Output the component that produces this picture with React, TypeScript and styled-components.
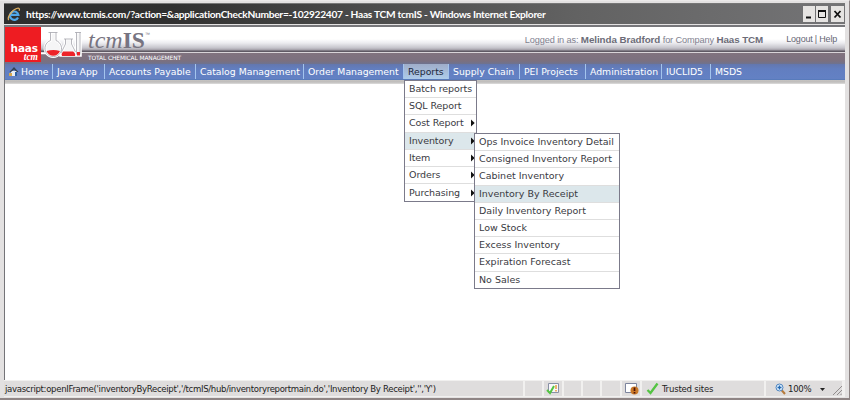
import React from 'react';
import styled, { createGlobalStyle } from 'styled-components';

const Global = createGlobalStyle`
  * { box-sizing: border-box; }
  html, body { margin: 0; padding: 0; overflow: hidden; background: #e3e1e1; }
`;

const verdana = `"DejaVu Sans", Verdana, sans-serif`;

const Window = styled.div`
  width: 850px;
  height: 400px;
  display: flex;
  flex-direction: column;
  background: #e3e1e1;
  border-top: 1px solid #ebe9e9;
  border-right: 1px solid #8d8484;
  border-bottom: 2px solid #8f8585;
  padding: 2px 3px 0 4px;
  font-family: ${verdana};
`;

const TitleBar = styled.header`
  height: 21px;
  flex: none;
  display: flex;
  align-items: center;
  border-top: 1px solid #777;
  margin-right: 1px;
  padding: 0 1px 0 3px;
  background: linear-gradient(90deg, #2e2e2e 0, #303030 20%, #4a4a4a 42%, #626262 68%, #747476 100%);
`;

const Title = styled.h1`
  margin: 0 auto 0 5px;
  font: 700 10.2px/19px Lato, "Trebuchet MS", sans-serif;
  letter-spacing: -0.28px;
  color: #fff;
  white-space: nowrap;
`;

const WindowButtons = styled.div`
  display: flex;
  gap: 1px;
  height: 16px;
  svg { display: block; width: 12px; height: 16px; background: #e6e4e2; }
  svg:last-child { width: 13px; margin-left: 2px; }
`;

const Page = styled.main`
  height: 355px;
  flex: none;
  display: flex;
  flex-direction: column;
  background: #fff;
  border-left: 1px solid #747478;
  border-top: 2px solid #77777b;
  margin: 1px 1px 0 0;
  position: relative;
`;

const Banner = styled.div`
  height: 37px;
  flex: none;
  display: flex;
  background: linear-gradient(180deg, #fff 0, #fff 12px, #ececf0 16px, #c4c3ca 21px, #a19da6 23px, #5f5964 24px, #5f5964 25px, #d8d4d8 25px, #d8d4d8 26px, #81737f 26px, #7b707f 34px, #6e7390 37px);
`;

const HaasLogo = styled.div`
  width: 36px;
  height: 35px;
  background: #ee1c22;
  color: #fff;
  display: flex;
  flex-direction: column;
  align-items: flex-end;
  padding: 16px 3px 0 0;
`;
const HaasName = styled.b`
  font: 700 10.5px/10px ${verdana};
  letter-spacing: -0.1px;
`;
const HaasUnit = styled.i`
  font: italic 700 9.5px/8px "Liberation Serif", serif;
`;

const Flasks = styled.svg`
  width: 44px;
  height: 35px;
  display: block;
`;

const Brand = styled.div`
  width: 110px;
  display: flex;
  flex-direction: column;
  padding: 0 0 0 3px;
`;
const BrandName = styled.div`
  height: 26px;
  font: italic 24px/27px "Liberation Serif", serif;
  color: #777481;
  white-space: nowrap;
  b { font-style: normal; font-size: 23.5px; color: #777481; }
  sup { font: 5px/5px "Liberation Sans", sans-serif; vertical-align: 12px; }
`;
const Tagline = styled.div`
  font: 5.9px/11px ${verdana};
  letter-spacing: -0.1px;
  color: #fff;
  white-space: nowrap;
`;

const Session = styled.div`
  margin-left: auto;
  height: 24px;
  display: flex;
  padding: 0 8px 0 0;
  font: 9.2px/25px "Liberation Sans", Arial, sans-serif;
  color: #81818f;
  white-space: nowrap;
  b { font-size: 9.8px; letter-spacing: -0.07px; color: #6c6c78; }
`;
const Login = styled.span`
  letter-spacing: -0.12px;
`;
const Links = styled.span`
  margin-left: 23px;
  font-size: 9px;
  letter-spacing: -0.2px;
  color: #666674;
`;

const Nav = styled.nav`
  height: 16px;
  flex: none;
  display: flex;
  background: linear-gradient(180deg, #6477ad 0, #627ec0 5px, #6381c4 100%);
  border-bottom: 1px solid #587bbb;
`;
const NavItem = styled.a<{ $w: number; $active?: boolean; $last?: boolean }>`
  width: ${(p) => p.$w}px;
  height: 15px;
  padding-left: 4px;
  flex: none;
  display: flex;
  font: 9.3px/15px ${verdana};
  color: ${(p) => (p.$active ? '#20283a' : '#fff')};
  background: ${(p) => (p.$active ? 'linear-gradient(180deg, #9fadc9, #aeccea)' : 'transparent')};
  border-right: ${(p) => (p.$last ? 'none' : '1px solid #a3c4ed')};
  white-space: nowrap;
  svg { width: 10px; height: 11px; margin: 2px 2px 0 0; flex: none; }
`;
const Shade = styled.div`
  height: 4px;
  flex: none;
  background: linear-gradient(180deg, #c5c3c1, #bebcbb 2px, #dedddc);
`;

const Menu = styled.ul<{ $x: number; $y: number; $w: number; $ls?: number }>`
  position: absolute;
  left: ${(p) => p.$x}px;
  top: ${(p) => p.$y}px;
  width: ${(p) => p.$w}px;
  letter-spacing: ${(p) => p.$ls ?? 0}px;
  margin: 0;
  padding: 0;
  list-style: none;
  background: #fff;
  border: 1px solid #7b7a8a;
`;
const MenuItem = styled.li<{ $active?: boolean }>`
  height: 17.2px;
  display: flex;
  align-items: center;
  justify-content: space-between;
  padding: 0 1px 0 4px;
  font: 9.5px/16px ${verdana};
  color: #3a3a42;
  white-space: nowrap;
  background: ${(p) => (p.$active ? '#dce7eb' : '#fff')};
  border-bottom: 1px solid #dedede;
  &:last-child { border-bottom: 0; height: 16.8px; }
  svg { width: 5px; height: 8px; }
`;

const StatusBar = styled.footer`
  height: 18px;
  flex: none;
  display: flex;
  gap: 2px;
  border-top: 1px solid #bcbab9;
  background: #f1f0ef;
  margin: -1px 1px 0 0;
  color: #222;
  font: 9.5px/15px "DejaVu Sans Condensed", "DejaVu Sans", Tahoma, sans-serif;
`;
const Cell = styled.div<{ $w: number; $pad?: number; $gap?: number; $ls?: number }>`
  width: ${(p) => p.$w}px;
  height: 15px;
  margin-top: 1px;
  flex: none;
  display: flex;
  align-items: center;
  gap: ${(p) => p.$gap ?? 0}px;
  padding-left: ${(p) => p.$pad ?? 0}px;
  letter-spacing: ${(p) => p.$ls ?? 0}px;
  background: #dfdddd;
  white-space: nowrap;
  svg { flex: none; display: block; }
`;
const DropArrow = styled.svg`
  width: 11px;
  height: 12px;
  margin-left: 7px;
`;

const IeIcon = () => (
  <svg width="14" height="15" viewBox="0 0 14 15">
    <path d="M11 10.5A4.2 4.2 0 1 1 11.3 7.8H4" fill="none" stroke="#4fa7e8" strokeWidth="2.2" />
    <path d="M2 13C-.7 12 4 3.500 9.500 1.500c3-1 3.400.5 2.600 2.200" fill="none" stroke="#dcaf62" strokeWidth="1.300" />
  </svg>
);
const HomeIcon = () => (
  <svg viewBox="0 0 10 11">
    <path d="M2 5h6v5H2z" fill="#e8edf5" />
    <path d="M.5 6 5 1 9.500 6H8L5 3.500 2 6z" fill="#36424f" />
    <path d="M6 6h2v4H6z" fill="#2d5fa0" />
    <path d="M0 7h3v3H0z" fill="#d8a74c" />
  </svg>
);
const Arrow = () => (
  <svg viewBox="0 0 5 8"><path d="M1 0.500 4.700 4 1 7.500z" fill="#111" /></svg>
);
const Glassware = () => (
  <Flasks viewBox="0 0 44 35">
    <path d="M0 26.500h40" stroke="#fff" strokeWidth="1.500" />
    <path d="M9.500 5.500h5.500v8a8.300 8.300 0 1 1-5.500 0zM24 12h7v5l5 11.500H20l4-11.500zM35 5.500h4.500v23H35z" fill="#f5f5f6" stroke="#fff" strokeWidth="2.600" />
    <path d="M7.500 5.500h9M9.500 5.500v8a8.300 8.300 0 1 0 5.500 0V5.500M23 12h9M24.500 12v5L20 26M30.500 12v5l4 8M34 5.500h6M35.500 5.500v22M39 5.500v22" fill="none" stroke="#a5a4ac" strokeWidth=".8" />
    <path d="M5.500 24q7-2 13.500 0-2 4.800-6.750 4.800t-6.750-4.800zM22 24.500h10q3 2 2 4.500H21q-1-2.500 1-4.500zM36 25h3v3.500h-3z" fill="#ed2329" />
  </Flasks>
);
const Check = ({ size = 13 }: { size?: number }) => (
  <svg width={size} height={size} viewBox="0 0 13 13">
    <path d="M1.500 8 4.500 11 11.500 1.500" fill="none" stroke="#54c443" strokeWidth="2.300" />
  </svg>
);

const navItems = [
  { label: 'Java App', w: 52 },
  { label: 'Accounts Payable', w: 91 },
  { label: 'Catalog Management', w: 108 },
  { label: 'Order Management', w: 100 },
  { label: 'Reports', w: 45, active: true },
  { label: 'Supply Chain', w: 71 },
  { label: 'PEI Projects', w: 66 },
  { label: 'Administration', w: 76 },
  { label: 'IUCLID5', w: 49 },
  { label: 'MSDS', w: 60, last: true },
];
const reports = [
  { label: 'Batch reports' },
  { label: 'SQL Report' },
  { label: 'Cost Report', sub: true },
  { label: 'Inventory', sub: true, active: true },
  { label: 'Item', sub: true },
  { label: 'Orders', sub: true },
  { label: 'Purchasing', sub: true },
];
const inventory = [
  'Ops Invoice Inventory Detail',
  'Consigned Inventory Report',
  'Cabinet Inventory',
  'Inventory By Receipt',
  'Daily Inventory Report',
  'Low Stock',
  'Excess Inventory',
  'Expiration Forecast',
  'No Sales',
];

export default function App() {
  return (
    <>
      <Global />
      <Window>
        <TitleBar>
          <IeIcon />
          <Title>https://www.tcmis.com/?action=&amp;applicationCheckNumber=-102922407 - Haas TCM tcmIS - Windows Internet Explorer</Title>
          <WindowButtons>
            <svg viewBox="0 0 12 16"><path d="M3 11.500h5" stroke="#111" strokeWidth="2" /></svg>
            <svg viewBox="0 0 12 16"><path d="M2.500 5h7v6.500h-7z" fill="none" stroke="#111" /><path d="M2 5h8" stroke="#111" strokeWidth="2" /></svg>
            <svg viewBox="0 0 13 16"><path d="m3.500 5 6 6.500m0-6.500-6 6.500" stroke="#111" strokeWidth="1.800" /></svg>
          </WindowButtons>
        </TitleBar>
        <Page>
          <Banner>
            <HaasLogo>
              <HaasName>haas</HaasName>
              <HaasUnit>tcm</HaasUnit>
            </HaasLogo>
            <Glassware />
            <Brand>
              <BrandName>tcm<b>IS</b><sup>™</sup></BrandName>
              <Tagline>TOTAL CHEMICAL MANAGEMENT</Tagline>
            </Brand>
            <Session>
              <Login>Logged in as: <b>Melinda Bradford</b> for Company <b>Haas TCM</b></Login>
              <Links>Logout | Help</Links>
            </Session>
          </Banner>
          <Nav>
            <NavItem $w={48}><HomeIcon />Home</NavItem>
            {navItems.map((n) => (
              <NavItem key={n.label} $w={n.w} $active={n.active} $last={n.last}>{n.label}</NavItem>
            ))}
          </Nav>
          <Shade />
          <Menu $x={399} $y={53} $w={73} $ls={-0.1}>
            {reports.map((r) => (
              <MenuItem key={r.label} $active={r.active}>{r.label}{r.sub && <Arrow />}</MenuItem>
            ))}
          </Menu>
          <Menu $x={469} $y={106} $w={146}>
            {inventory.map((label) => (
              <MenuItem key={label} $active={label === 'Inventory By Receipt'}>{label}</MenuItem>
            ))}
          </Menu>
        </Page>
        <StatusBar>
          <Cell $w={519} $pad={1} $ls={-0.31}>javascript:openIFrame('inventoryByReceipt','/tcmIS/hub/inventoryreportmain.do','Inventory By Receipt','','Y')</Cell>
          <Cell $w={17} />
          <Cell $w={18} $pad={2}>
            <svg width="14" height="13" viewBox="0 0 14 13">
              <path d="M2.500 1.500h10v9h-10z" fill="#f8f8fa" stroke="#8890a5" />
              <path d="M10 3v4M10 8v1.500" stroke="#e69a3e" strokeWidth="1.500" />
              <path d="m1 8 3 3 4-7" fill="none" stroke="#54c443" strokeWidth="2" />
            </svg>
          </Cell>
          <Cell $w={17} />
          <Cell $w={17} />
          <Cell $w={18} />
          <Cell $w={18} $pad={2}>
            <svg width="15" height="13" viewBox="0 0 15 13">
              <path d="M1.500 1.500h11v9h-11z" fill="#fff" stroke="#7c849d" />
              <circle cx="10.500" cy="8.500" r="4" fill="#c97828" />
              <path d="M10.500 5.500v3.500M10.500 10v1.500" stroke="#4c1208" strokeWidth="1.700" />
            </svg>
          </Cell>
          <Cell $w={122} $pad={4} $gap={3} $ls={-0.2}><Check />Trusted sites</Cell>
          <Cell $w={76} $pad={9} $gap={2} $ls={-0.3}>
            <svg width="11" height="12" viewBox="0 0 11 12">
              <path d="m6.500 7 3.500 4" stroke="#b57b3d" strokeWidth="2" />
              <circle cx="4.500" cy="4.500" r="3.500" fill="#dff0ff" stroke="#4d83bf" />
              <path d="M4.500 2.500v4M2.500 4.500h4" stroke="#2468b0" strokeWidth="1.300" />
            </svg>
            100%
            <DropArrow viewBox="0 0 11 12"><path d="M0 5h5L2.500 8z" fill="#222" /></DropArrow>
            <svg width="9" height="12" viewBox="0 0 9 12"><path d="m0 12 9-9M4 12l5-5M7.500 12 9 10.500" stroke="#918d8d" /></svg>
          </Cell>
        </StatusBar>
      </Window>
    </>
  );
}
